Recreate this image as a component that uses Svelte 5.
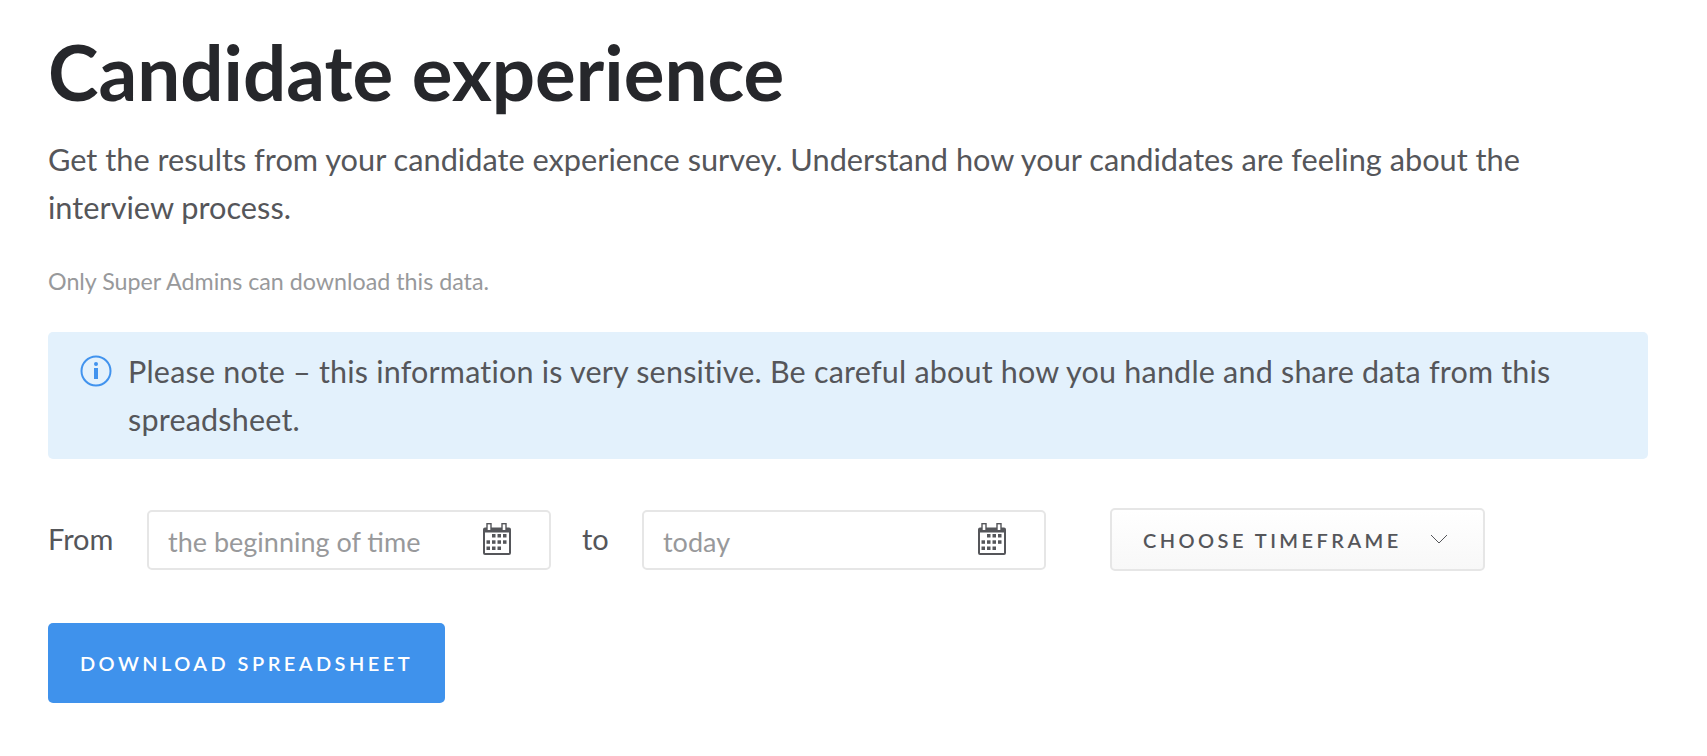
<script>
	const dateFields = [
		{ placeholder: 'the beginning of time' },
		{ placeholder: 'today' }
	];
	const dayCells = [
		[9, 11], [14.5, 11], [20, 11],
		[3.5, 17.300], [9, 17.300], [14.5, 17.300], [20, 17.300],
		[3.5, 23.500], [9, 23.500], [14.5, 23.500]
	];
</script>

{#snippet dateField(placeholder)}
	<div class="date-field">
		<span class="placeholder">{placeholder}</span>
		<svg class="calendar" viewBox="0 0 28 32" width="28" height="32" aria-hidden="true">
			<path
				fill="#55565a"
				fill-rule="evenodd"
				d="M2 4.500h24a2 2 0 0 1 2 2V30a2 2 0 0 1-2 2H2a2 2 0 0 1-2-2V6.500a2 2 0 0 1 2-2zM2 9.500V30h24V9.500z"
			/>
			<rect x="4" y="0.700" width="4" height="7" fill="#fff" stroke="#55565a" stroke-width="1.400" />
			<rect x="19" y="0.700" width="4" height="7" fill="#fff" stroke="#55565a" stroke-width="1.400" />
			<g fill="#55565a">
				{#each dayCells as [x, y]}
					<rect {x} {y} width="3.500" height="3.500" />
				{/each}
			</g>
		</svg>
	</div>
{/snippet}

<main class="page">
	<h1>Candidate experience</h1>
	<p class="lead">Get the results from your candidate experience survey. Understand how your candidates are feeling about the interview process.</p>
	<p class="hint">Only Super Admins can download this data.</p>

	<div class="notice">
		<svg class="info" viewBox="0 0 32 32" width="32" height="32" aria-hidden="true">
			<circle cx="16" cy="16" r="14.500" fill="none" stroke="#4193ee" stroke-width="2" />
			<circle cx="16" cy="9" r="2" fill="#4193ee" />
			<rect x="14" y="13" width="4" height="11" fill="#4193ee" />
		</svg>
		<p>Please note – this information is very sensitive. Be careful about how you handle and share data from this spreadsheet.</p>
	</div>

	<div class="range">
		<span class="label from">From</span>
		{@render dateField(dateFields[0].placeholder)}
		<span class="label to">to</span>
		{@render dateField(dateFields[1].placeholder)}
		<button class="timeframe" type="button">
			CHOOSE TIMEFRAME
			<svg viewBox="0 0 18 10" width="18" height="10" aria-hidden="true">
				<path d="M1 1l8 8 8-8" fill="none" stroke="#55565a" stroke-width="1" />
			</svg>
		</button>
	</div>

	<button class="download" type="button">DOWNLOAD SPREADSHEET</button>
</main>

<style>
	:global(body) {
		margin: 0;
		background: #fff;
	}

	.page {
		width: 1600px;
		padding: 26px 0 0 48px;
		font-family: Lato, "Noto Sans", sans-serif;
		color: #55565a;
	}

	h1 {
		margin: 0;
		font-size: 76.300px;
		line-height: 92px;
		font-weight: 700;
		color: #26272b;
	}

	.lead {
		margin: 18px 0 0;
		width: 1560px;
		font-size: 30.730px;
		line-height: 48px;
	}

	.hint {
		margin: 33px 0 0;
		font-size: 23.250px;
		line-height: 32px;
		color: #98999b;
	}

	.notice {
		display: flex;
		gap: 16px;
		box-sizing: border-box;
		width: 1600px;
		height: 127px;
		margin-top: 35px;
		padding: 15px 32px;
		background: #e3f1fc;
		border-radius: 5px;
	}

	.notice p {
		margin: 0;
		font-size: 30.500px;
		line-height: 48px;
		letter-spacing: 0.2px;
	}

	.info {
		flex: none;
		margin-top: 8px;
	}

	.range {
		display: flex;
		align-items: center;
		margin-top: 49px;
	}

	.label {
		font-size: 29px;
		margin-top: -2px;
	}

	.from {
		width: 99px;
	}

	.to {
		width: 60px;
		padding-left: 31px;
	}

	.date-field {
		display: flex;
		align-items: center;
		justify-content: space-between;
		box-sizing: border-box;
		width: 404px;
		height: 60px;
		padding: 0 38px 0 19px;
		border: 2px solid #e6e6e6;
		border-radius: 5px;
	}

	.placeholder {
		margin-top: 4px;
		font-size: 27px;
		color: #98999b;
	}

	.calendar {
		margin-top: -2px;
	}

	.timeframe {
		display: flex;
		align-items: center;
		gap: 28px;
		box-sizing: border-box;
		width: 375px;
		height: 63px;
		margin-left: 64px;
		padding: 0 0 0 31px;
		border: 2px solid #e6e6e6;
		border-radius: 5px;
		background: linear-gradient(#fff, #f8f8f8);
		font: 600 20px Lato, "Noto Sans", sans-serif;
		letter-spacing: 3.450px;
		color: #55565a;
	}

	.timeframe svg {
		margin-top: -2px;
	}

	.download {
		display: block;
		box-sizing: border-box;
		width: 397px;
		height: 80px;
		margin-top: 52px;
		padding: 0;
		border: 0;
		border-radius: 5px;
		background: #3f92ec;
		font: 600 20px Lato, "Noto Sans", sans-serif;
		letter-spacing: 3.450px;
		color: #fff;
	}
</style>
